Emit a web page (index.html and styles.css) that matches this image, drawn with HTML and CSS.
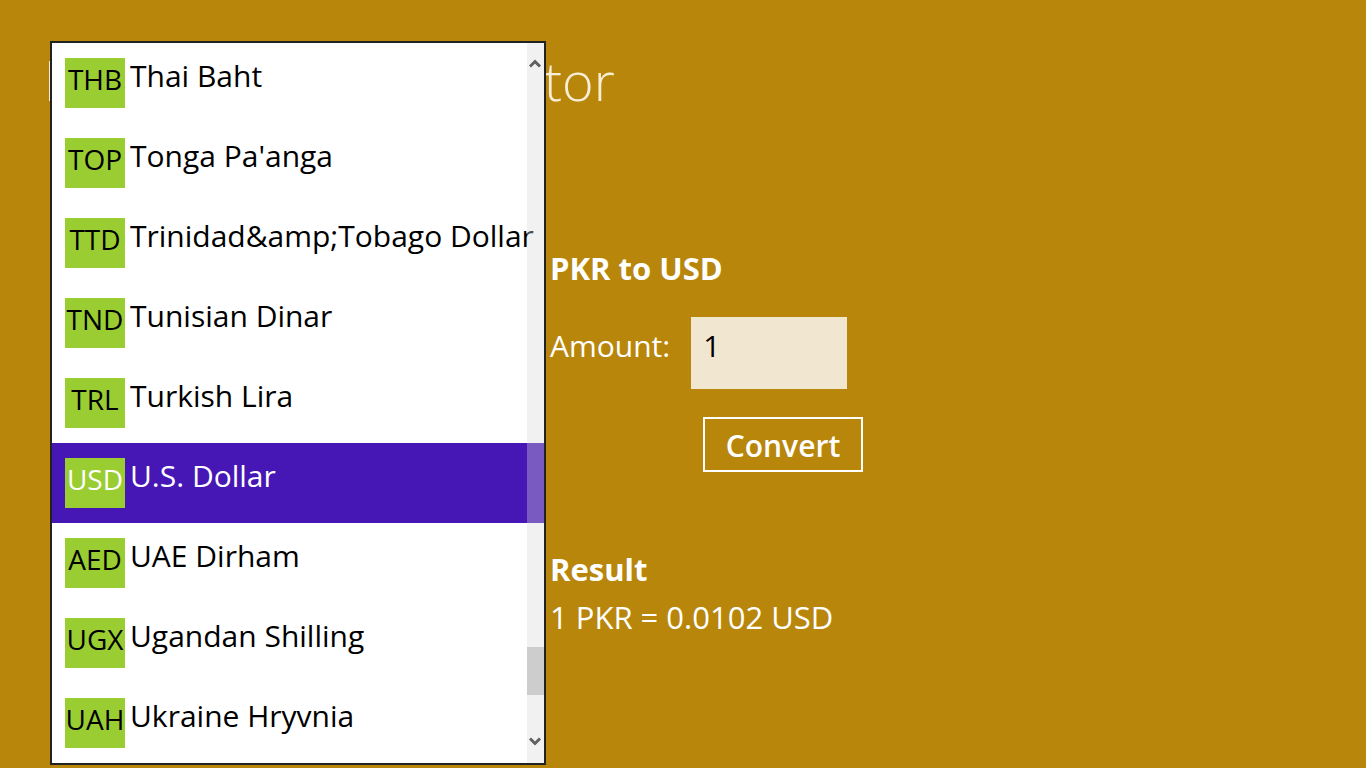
FILE: index.html
```html
<!DOCTYPE html>
<html lang="en">
<head>
<meta charset="utf-8">
<title>PKR to USD</title>
<link rel="stylesheet" href="styles.css">
</head>
<body>
<header class="page-header">
  <span class="title-stem" aria-hidden="true"></span>
  <h1 class="title">tor</h1>
</header>
<main class="converter">
  <h2 class="heading">PKR to USD</h2>
  <form class="form">
    <div class="amount-row">
      <label for="amount">Amount:</label>
      <input class="amount" id="amount" type="text" value="1">
    </div>
    <button class="convert" type="button">Convert</button>
  </form>
  <section class="result">
    <h2 class="heading">Result</h2>
    <p class="result-text">1 PKR = 0.0102 USD</p>
  </section>
</main>
<div class="popup">
  <ul class="options" role="listbox" aria-label="Currency" tabindex="0">
    <li class="option" role="option"><span class="code">THB</span><span class="name">Thai Baht</span></li>
    <li class="option" role="option"><span class="code">TOP</span><span class="name">Tonga Pa'anga</span></li>
    <li class="option" role="option"><span class="code">TTD</span><span class="name">Trinidad&amp;amp;Tobago Dollar</span></li>
    <li class="option" role="option"><span class="code">TND</span><span class="name">Tunisian Dinar</span></li>
    <li class="option" role="option"><span class="code">TRL</span><span class="name">Turkish Lira</span></li>
    <li class="option selected" role="option" aria-selected="true"><span class="code">USD</span><span class="name">U.S. Dollar</span></li>
    <li class="option" role="option"><span class="code">AED</span><span class="name">UAE Dirham</span></li>
    <li class="option" role="option"><span class="code">UGX</span><span class="name">Ugandan Shilling</span></li>
    <li class="option" role="option"><span class="code">UAH</span><span class="name">Ukraine Hryvnia</span></li>
  </ul>
  <div class="scrollbar">
    <button class="arrow" type="button" aria-label="Scroll up"><svg width="13" height="12" viewBox="0 0 13 12"><path d="M1 8.5 6 3.5 11 8.5" /></svg></button>
    <div class="track"><div class="thumb"></div></div>
    <button class="arrow" type="button" aria-label="Scroll down"><svg width="13" height="12" viewBox="0 0 13 12"><path d="M1 2.5 6 7.5 11 2.5" /></svg></button>
  </div>
</div>
</body>
</html>
```
FILE: styles.css
```css
* { box-sizing: border-box; }
body {
  margin: 0;
  min-height: 100vh;
  overflow: hidden;
  background: #b8860b;
  color: #fff;
  font-family: "Open Sans", "Noto Sans", sans-serif;
  font-size: 30px;
  line-height: 40px;
}
.page-header {
  display: flex;
  align-items: center;
  height: 160px;
  padding-left: 49px;
}
.title-stem {
  width: 3px;
  height: 40px;
  margin-top: 2px;
  background: #f5ead2;
}
.title {
  margin: 0;
  padding-left: 492px;
  color: #f8edd6;
  font-size: 54px;
  font-weight: 300;
  line-height: 72px;
}
.converter { padding: 88px 0 0 550px; }
.heading {
  margin: 0;
  font-size: 31px;
  font-weight: 700;
}
.form {
  display: flex;
  flex-direction: column;
  align-items: flex-start;
  gap: 28px;
  padding-top: 29px;
}
.amount-row {
  display: flex;
  gap: 21px;
}
.amount-row label { padding-top: 9px; }
.amount {
  width: 156px;
  height: 72px;
  padding: 0 12px 16px;
  border: 0;
  background: #f1e7d0;
  color: #000;
  font: inherit;
}
.convert {
  height: 55px;
  width: 160px;
  margin-left: 153px;
  padding: 3px 0 0;
  border: 2px solid #fff;
  background: none;
  color: #fff;
  font: inherit;
  font-weight: 600;
}
.result { padding-top: 77px; }
.result-text {
  margin: 8px 0 0;
  font-size: 31px;
}
.popup {
  position: absolute;
  top: 41px;
  left: 50px;
  width: 496px;
  border: 2px solid #222;
  background: #fff;
  color: #000;
}
.options {
  margin: 0;
  padding: 0;
  list-style: none;
  outline: 0;
}
.option {
  display: flex;
  gap: 5px;
  height: 80px;
  padding: 15px 0 0 13px;
  white-space: nowrap;
}
.selected {
  background: #4617b4;
  color: #fff;
}
.code {
  display: flex;
  justify-content: center;
  width: 60px;
  height: 50px;
  background: #9acd32;
  font-size: 28px;
  line-height: 42px;
}
.name { line-height: 36px; }
.scrollbar {
  position: absolute;
  top: 0;
  right: 0;
  bottom: 0;
  display: flex;
  flex-direction: column;
  width: 17px;
  background: rgba(214, 214, 214, 0.35);
}
.arrow {
  display: flex;
  justify-content: center;
  align-items: center;
  height: 42px;
  padding: 0;
  border: 0;
  background: none;
}
.arrow path {
  fill: none;
  stroke: #606060;
  stroke-width: 3;
}
.track {
  display: flex;
  flex-direction: column;
  justify-content: flex-end;
  flex: 1;
  padding-bottom: 26px;
}
.thumb {
  height: 48px;
  background: #cdcdcd;
}
```
